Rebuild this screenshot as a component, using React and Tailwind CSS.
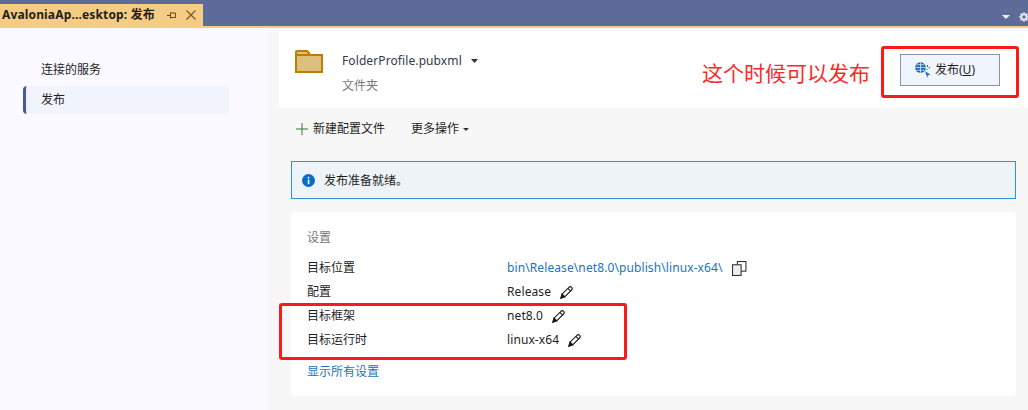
import React from "react";

const font = { fontFamily: '"Noto Sans", "Noto Sans CJK SC", sans-serif' };

function Pencil({ className }) {
  return (
    <svg viewBox="0 0 14 14" className={className} fill="none" stroke="#1a1a1a" strokeWidth="1.2">
      <path d="M1 13 L2.2 8.8 L9.6 1.4 C10.5 .5 11.7 .5 12.5 1.4 C13.4 2.2 13.4 3.4 12.5 4.3 L5.1 11.7 Z" />
      <path d="M1 13 L2.2 8.8 L5.1 11.7 Z" fill="#1a1a1a" />
      <path d="M8.6 2.6 L11.3 5.3" />
    </svg>
  );
}

function Row({ label, children }) {
  return (
    <div className="flex h-6 items-center text-[12px] text-[#1e1e1e]">
      <div className="w-[200px] shrink-0">{label}</div>
      <div className="flex items-center tracking-[0.1px]">{children}</div>
    </div>
  );
}

export default function App() {
  return (
    <div className="relative flex h-[410px] w-[1028px] flex-col overflow-hidden bg-[#f7f7f7]" style={font}>
      <div className="flex h-[26px] items-end justify-between bg-[#5d6b98] pt-1">
        <div className="flex h-[22px] w-[203px] items-center bg-[#f5cc84] pl-0.5">
          <span className="text-[12px] font-bold leading-none tracking-[0.15px] text-[#1e1e1e]">AvaloniaAp...esktop: 发布</span>
          <svg viewBox="0 0 10 10" className="ml-[12px] h-2.5 w-2.5" fill="none" stroke="#6b4a1c" strokeWidth="1">
            <path d="M0 5.5 H3 M3.5 2.5 V8.5 M3.5 3 H8.5 V7.5 H3.5" />
          </svg>
          <svg viewBox="0 0 10 10" className="ml-[9px] h-2.5 w-2.5" fill="none" stroke="#7a5a2c" strokeWidth="1.2">
            <path d="M.5 .5 L9.5 9.5 M9.5 .5 L.5 9.5" />
          </svg>
        </div>
        <div className="flex items-center gap-[9px] self-center pt-1">
          <svg viewBox="0 0 8 4" className="h-1 w-2"><path d="M0 0 H8 L4 4 Z" fill="#eef0f8" /></svg>
          <svg viewBox="0 0 10 10" className="-mr-[1px] h-2.5 w-2.5" fill="none" stroke="#e6e8f2" strokeWidth="2">
            <circle cx="5" cy="5" r="2.7" />
            <path d="M5 0 V1.8 M5 8.2 V10 M0 5 H1.8 M8.2 5 H10 M1.5 1.5 L2.7 2.7 M7.3 7.3 L8.5 8.5 M8.5 1.5 L7.3 2.7 M2.7 7.3 L1.5 8.5" strokeWidth="1.3" />
          </svg>
        </div>
      </div>
      <div className="h-0.5 bg-[#f5cc84]" />

      <div className="flex min-h-0 flex-1">
        <aside className="w-[267px] shrink-0 bg-[#f9f9ff] pl-[23px] pt-[27px]">
          <div className="flex h-[30px] items-center pl-[18px] text-[12px] text-[#1e1e1e]">连接的服务</div>
          <div className="mt-px flex h-7 w-[206px] items-center rounded-l-sm rounded-r bg-[#f2f4fd] pl-[15px] text-[12px] text-[#1e1e1e] [border-left:3px_solid_#4a5a94]">发布</div>
        </aside>

        <main className="flex min-w-0 flex-1 flex-col pl-3 pt-[3px]">
          <header className="flex h-[77px] shrink-0 items-start rounded-bl bg-white pl-4">
            <svg viewBox="0 0 28 23" className="mt-[19px] h-[23px] w-7 shrink-0">
              <path d="M1 5 V2 Q1 1 2 1 H12 L14 3 V5 H27 V22 H1 Z" fill="#dcbf7c" stroke="#b98000" strokeWidth="2" />
              <path d="M1 5 H14" stroke="#b98000" strokeWidth="2" />
            </svg>
            <div className="ml-[19px] pt-[21px]">
              <div className="flex h-[18px] items-center text-[12px] tracking-[0.1px] text-[#333a4a]">
                FolderProfile.pubxml
                <svg viewBox="0 0 7 4" className="ml-[9px] h-1 w-[7px]"><path d="M0 0 H7 L3.5 4 Z" fill="#333" /></svg>
              </div>
              <div className="mt-[7px] text-[12px] leading-[18px] text-[#777]">文件夹</div>
            </div>
            <button className="mr-[28px] ml-auto mt-[23px] flex h-8 w-[100px] items-center justify-start border border-[#8a94a8] bg-[#f0f4fd] pl-[14px] text-[12px] text-[#1e1e1e]">
              <svg viewBox="0 0 16 16" className="mr-[4px] h-4 w-4">
                <circle cx="5.5" cy="5.5" r="5.3" fill="#1f66b0" />
                <path d="M.4 5.5 H10.6 M5.5 .4 V10.6 M1.6 2.8 H9.4 M1.6 8.2 H9.4" stroke="#fff" strokeWidth=".7" fill="none" />
                <path d="M10 9 L15.5 12.8 L12.8 13.2 L12.3 16 Z" fill="#1c6cc0" />
                <path d="M12.5 3 V5 M15 5 L13.5 6 M11.5 7 L12.5 8" stroke="#1f66b0" strokeWidth="1" />
              </svg>
              <span>发布(<span className="underline">U</span>)</span>
            </button>
          </header>

          <div className="flex flex-col px-3">
            <div className="flex h-[42px] shrink-0 items-center pl-[5px] text-[12px] text-[#1e1e1e]">
              <svg viewBox="0 0 12 12" className="h-3 w-3" fill="none" stroke="#2f7d32" strokeWidth="1">
                <path d="M6 0 V12 M0 6 H12" />
              </svg>
              <span className="ml-[5px]">新建配置文件</span>
              <span className="ml-[26px]">更多操作</span>
              <svg viewBox="0 0 6 3" className="ml-1 mt-px h-[3px] w-1.5"><path d="M0 0 H6 L3 3 Z" fill="#333" /></svg>
            </div>

            <div className="mt-[11px] flex h-[38px] shrink-0 items-center border border-[#2e93cf] bg-[#eef3f7] pl-[10px] text-[12px] text-[#1e1e1e]">
              <svg viewBox="0 0 14 14" className="h-[13px] w-[13px]">
                <circle cx="7" cy="7" r="7" fill="#0a6cc4" />
                <rect x="6.2" y="6" width="1.7" height="5" fill="#fff" />
                <rect x="6.2" y="3" width="1.7" height="1.8" fill="#fff" />
              </svg>
              <span className="ml-[9px] pt-px">发布准备就绪。</span>
            </div>

            <section className="mt-[13px] h-[184px] shrink-0 rounded bg-white pl-4 pt-[17px]">
              <div className="text-[12px] leading-[18px] text-[#777]">设置</div>
              <div className="mt-[9px]">
                <Row label="目标位置">
                  <span className="text-[#1a74c4]">bin\Release\net8.0\publish\linux-x64\</span>
                  <svg viewBox="0 0 14 14" className="ml-[9px] h-[15px] w-[15px]" fill="#fff" stroke="#333" strokeWidth="1">
                    <rect x="5" y=".5" width="8" height="9" />
                    <rect x=".5" y="3.5" width="8" height="10" fill="#eee" />
                  </svg>
                </Row>
                <Row label="配置">
                  <span>Release</span>
                  <Pencil className="ml-[9px] h-[13px] w-[13px]" />
                </Row>
                <Row label="目标框架">
                  <span>net8.0</span>
                  <Pencil className="ml-[9px] h-[13px] w-[13px]" />
                </Row>
                <Row label="目标运行时">
                  <span>linux-x64</span>
                  <Pencil className="ml-[9px] h-[13px] w-[13px]" />
                </Row>
              </div>
              <div className="mt-[11px] text-[12px] leading-[18px] text-[#1a74c4]">显示所有设置</div>
            </section>
          </div>
        </main>
      </div>

      <div className="absolute left-[881px] top-[46px] h-[52px] w-[138px] rounded-[3px] border-[3px] border-[#fb1a1a]" />
      <div className="absolute left-[279px] top-[303px] h-[57px] w-[348px] rounded-[3px] border-[3px] border-[#fb1a1a]" />
      <div className="absolute left-[702px] top-[58px] text-[21px] leading-[30px] text-[#fb2a2a]">这个时候可以发布</div>
    </div>
  );
}
